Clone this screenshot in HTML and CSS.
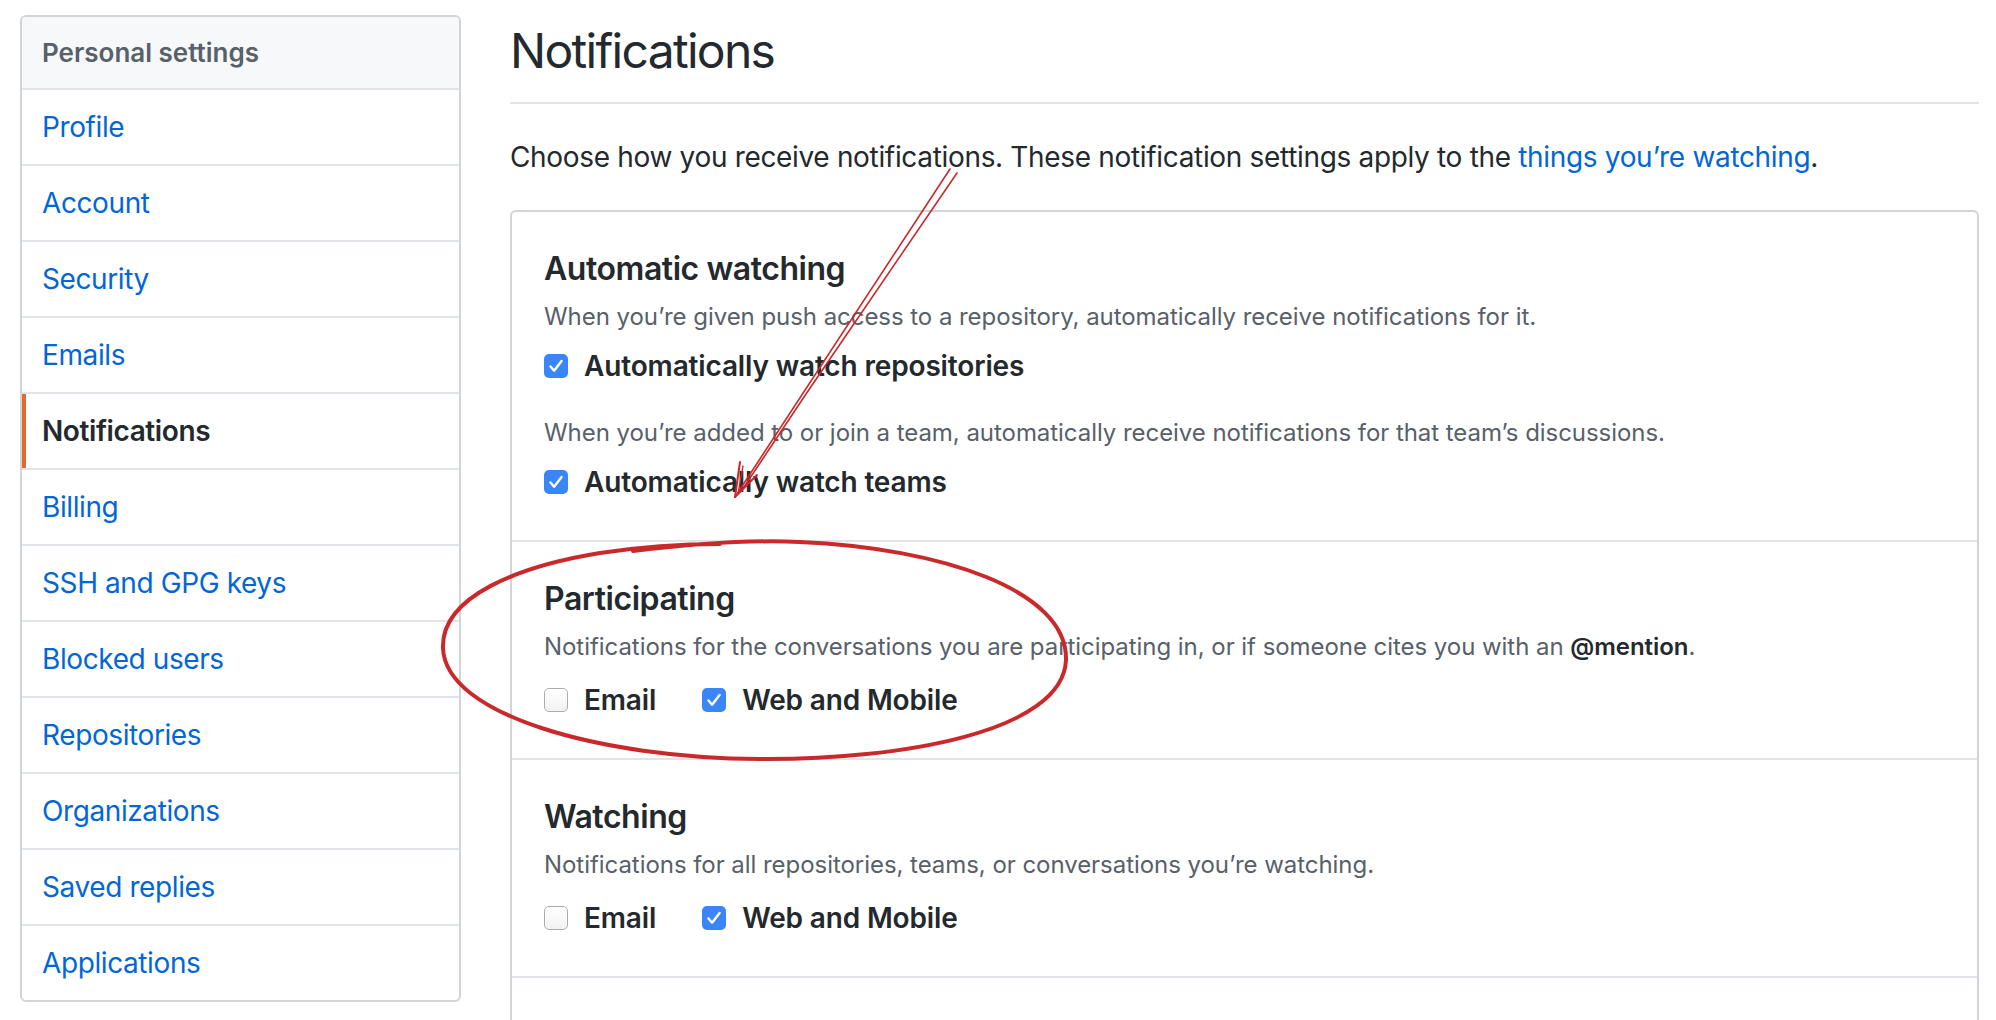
FILE: index.html
```html
<!DOCTYPE html>
<html lang="en">
<head>
<meta charset="utf-8">
<title>Notifications settings</title>
<link rel="stylesheet" href="styles.css">
</head>
<body>
<div class="page">
  <nav class="sidebar">
    <div class="menu-heading">Personal settings</div>
    <a class="menu-item" href="#">Profile</a>
    <a class="menu-item" href="#">Account</a>
    <a class="menu-item" href="#">Security</a>
    <a class="menu-item" href="#">Emails</a>
    <a class="menu-item selected" href="#">Notifications</a>
    <a class="menu-item" href="#">Billing</a>
    <a class="menu-item" href="#">SSH and GPG keys</a>
    <a class="menu-item" href="#">Blocked users</a>
    <a class="menu-item" href="#">Repositories</a>
    <a class="menu-item" href="#">Organizations</a>
    <a class="menu-item" href="#">Saved replies</a>
    <a class="menu-item" href="#">Applications</a>
  </nav>
  <main class="main">
    <div class="subhead"><h1>Notifications</h1></div>
    <p class="lead">Choose how you receive notifications. These notification settings apply to the <a href="#">things you’re watching</a>.</p>
    <div class="box">
      <section class="section">
        <h2>Automatic watching</h2>
        <p class="note">When you’re given push access to a repository, automatically receive notifications for it.</p>
        <label class="check-row"><span class="cb on"><svg viewBox="0 0 24 24"><path d="M6.5 12.5l3.6 4.2L17.6 7"/></svg></span>Automatically watch repositories</label>
        <p class="note second">When you’re added to or join a team, automatically receive notifications for that team’s discussions.</p>
        <label class="check-row"><span class="cb on"><svg viewBox="0 0 24 24"><path d="M6.5 12.5l3.6 4.2L17.6 7"/></svg></span>Automatically watch teams</label>
      </section>
      <section class="section">
        <h2>Participating</h2>
        <p class="note">Notifications for the conversations you are participating in, or if someone cites you with an <strong>@mention</strong>.</p>
        <div class="options">
          <label class="opt"><span class="cb"></span>Email</label>
          <label class="opt"><span class="cb on"><svg viewBox="0 0 24 24"><path d="M6.5 12.5l3.6 4.2L17.6 7"/></svg></span>Web and Mobile</label>
        </div>
      </section>
      <section class="section">
        <h2>Watching</h2>
        <p class="note">Notifications for all repositories, teams, or conversations you’re watching.</p>
        <div class="options">
          <label class="opt"><span class="cb"></span>Email</label>
          <label class="opt"><span class="cb on"><svg viewBox="0 0 24 24"><path d="M6.5 12.5l3.6 4.2L17.6 7"/></svg></span>Web and Mobile</label>
        </div>
      </section>
      <section class="section tail"></section>
    </div>
  </main>
</div>
<svg class="annot" width="1996" height="1020" viewBox="0 0 1996 1020">
  <g fill="none" stroke="#c9292b" stroke-linecap="round" stroke-linejoin="round">
    <path d="M950 169 L735 497" stroke-width="1.6"/>
    <path d="M957 173 L806 394 L742 490" stroke-width="1.6"/>
    <path d="M735 497 L740 462" stroke-width="2"/>
    <path d="M738 494 L743 466" stroke-width="1.4"/>
    <path d="M735 497 L757 475" stroke-width="2"/>
    <path d="M633 551 C 700 543, 760 540, 800 542 C 940 548, 1068 590, 1066 660 C 1063 732, 900 760, 760 759 C 600 758, 445 715, 443 648 C 441 596, 520 566, 600 553 C 640 547, 680 544, 720 544" stroke-width="4"/>
  </g>
</svg>
</body>
</html>
```
FILE: styles.css
```css
html, body {
  margin: 0;
  padding: 0;
  overflow: hidden;
  background: #ffffff;
}

body {
  font-family: Inter, "Noto Sans", "Liberation Sans", sans-serif;
  color: #24292e;
}

.page {
  display: flex;
  align-items: flex-start;
  gap: 49px;
  padding: 15px 17px 0 20px;
}

/* Sidebar */
.sidebar {
  width: 441px;
  flex: none;
  box-sizing: border-box;
  border: 2px solid #d1d5da;
  border-radius: 6px;
  overflow: hidden;
}

.menu-heading {
  background: #f6f8fa;
  padding: 16px 20px 16px;
  font-size: 26px;
  line-height: 39px;
  font-weight: 600;
  color: #586069;
}

.menu-item {
  display: block;
  position: relative;
  border-top: 2px solid #e1e4e8;
  padding: 16px 20px;
  font-size: 28px;
  line-height: 42px;
  letter-spacing: -0.4px;
  color: #0366d6;
  text-decoration: none;
}

.menu-item.selected {
  color: #24292e;
  font-weight: 600;
}

.menu-item.selected::before {
  content: "";
  position: absolute;
  left: 0;
  top: 0;
  bottom: 0;
  width: 4px;
  background: #e8672a;
}

/* Main */
.main {
  flex: 1;
  min-width: 0;
}

.subhead {
  padding-top: 6px;
  padding-bottom: 21px;
  border-bottom: 2px solid #e1e4e8;
}

.subhead h1 {
  margin: 0;
  font-size: 48px;
  line-height: 60px;
  font-weight: 400;
  letter-spacing: -1.7px;
}

.lead {
  margin: 32px 0 32px;
  font-size: 28px;
  line-height: 42px;
  letter-spacing: -0.33px;
}

.lead a {
  color: #0366d6;
  text-decoration: none;
}

.box {
  border: 2px solid #d1d5da;
  border-bottom: none;
  border-radius: 6px 6px 0 0;
}

.section {
  padding: 37px 32px 37px;
}

.section + .section {
  border-top: 2px solid #e1e4e8;
}

.section.tail {
  height: 120px;
}

.section h2 {
  margin: 0;
  font-size: 32px;
  line-height: 40px;
  font-weight: 600;
  letter-spacing: -0.45px;
}

.note {
  margin: 10px 0 0;
  font-size: 24px;
  line-height: 36px;
  letter-spacing: -0.05px;
  color: #586069;
}

.note strong {
  color: #24292e;
  font-weight: 600;
}

.note.second {
  margin-top: 28px;
}

.check-row {
  display: flex;
  align-items: center;
  gap: 16px;
  margin-top: 10px;
  font-size: 28px;
  line-height: 42px;
  font-weight: 600;
  letter-spacing: -0.15px;
}

.options {
  display: flex;
  align-items: center;
  gap: 46px;
  margin-top: 14px;
}

.opt {
  display: flex;
  align-items: center;
  gap: 16px;
  font-size: 28px;
  line-height: 42px;
  font-weight: 600;
  letter-spacing: -0.15px;
}

.cb {
  width: 24px;
  height: 24px;
  flex: none;
  box-sizing: border-box;
  border-radius: 5px;
  border: 1.5px solid #ababab;
  background: linear-gradient(#ffffff, #f2f2f2);
  display: flex;
  align-items: center;
  justify-content: center;
}

.cb.on {
  border: none;
  background: #3b86f6;
}

.cb svg {
  width: 24px;
  height: 24px;
}

.cb svg path {
  fill: none;
  stroke: #ffffff;
  stroke-width: 2.4;
  stroke-linecap: round;
  stroke-linejoin: round;
}

/* Annotation overlay */
.annot {
  position: absolute;
  left: 0;
  top: 0;
  pointer-events: none;
}
```
